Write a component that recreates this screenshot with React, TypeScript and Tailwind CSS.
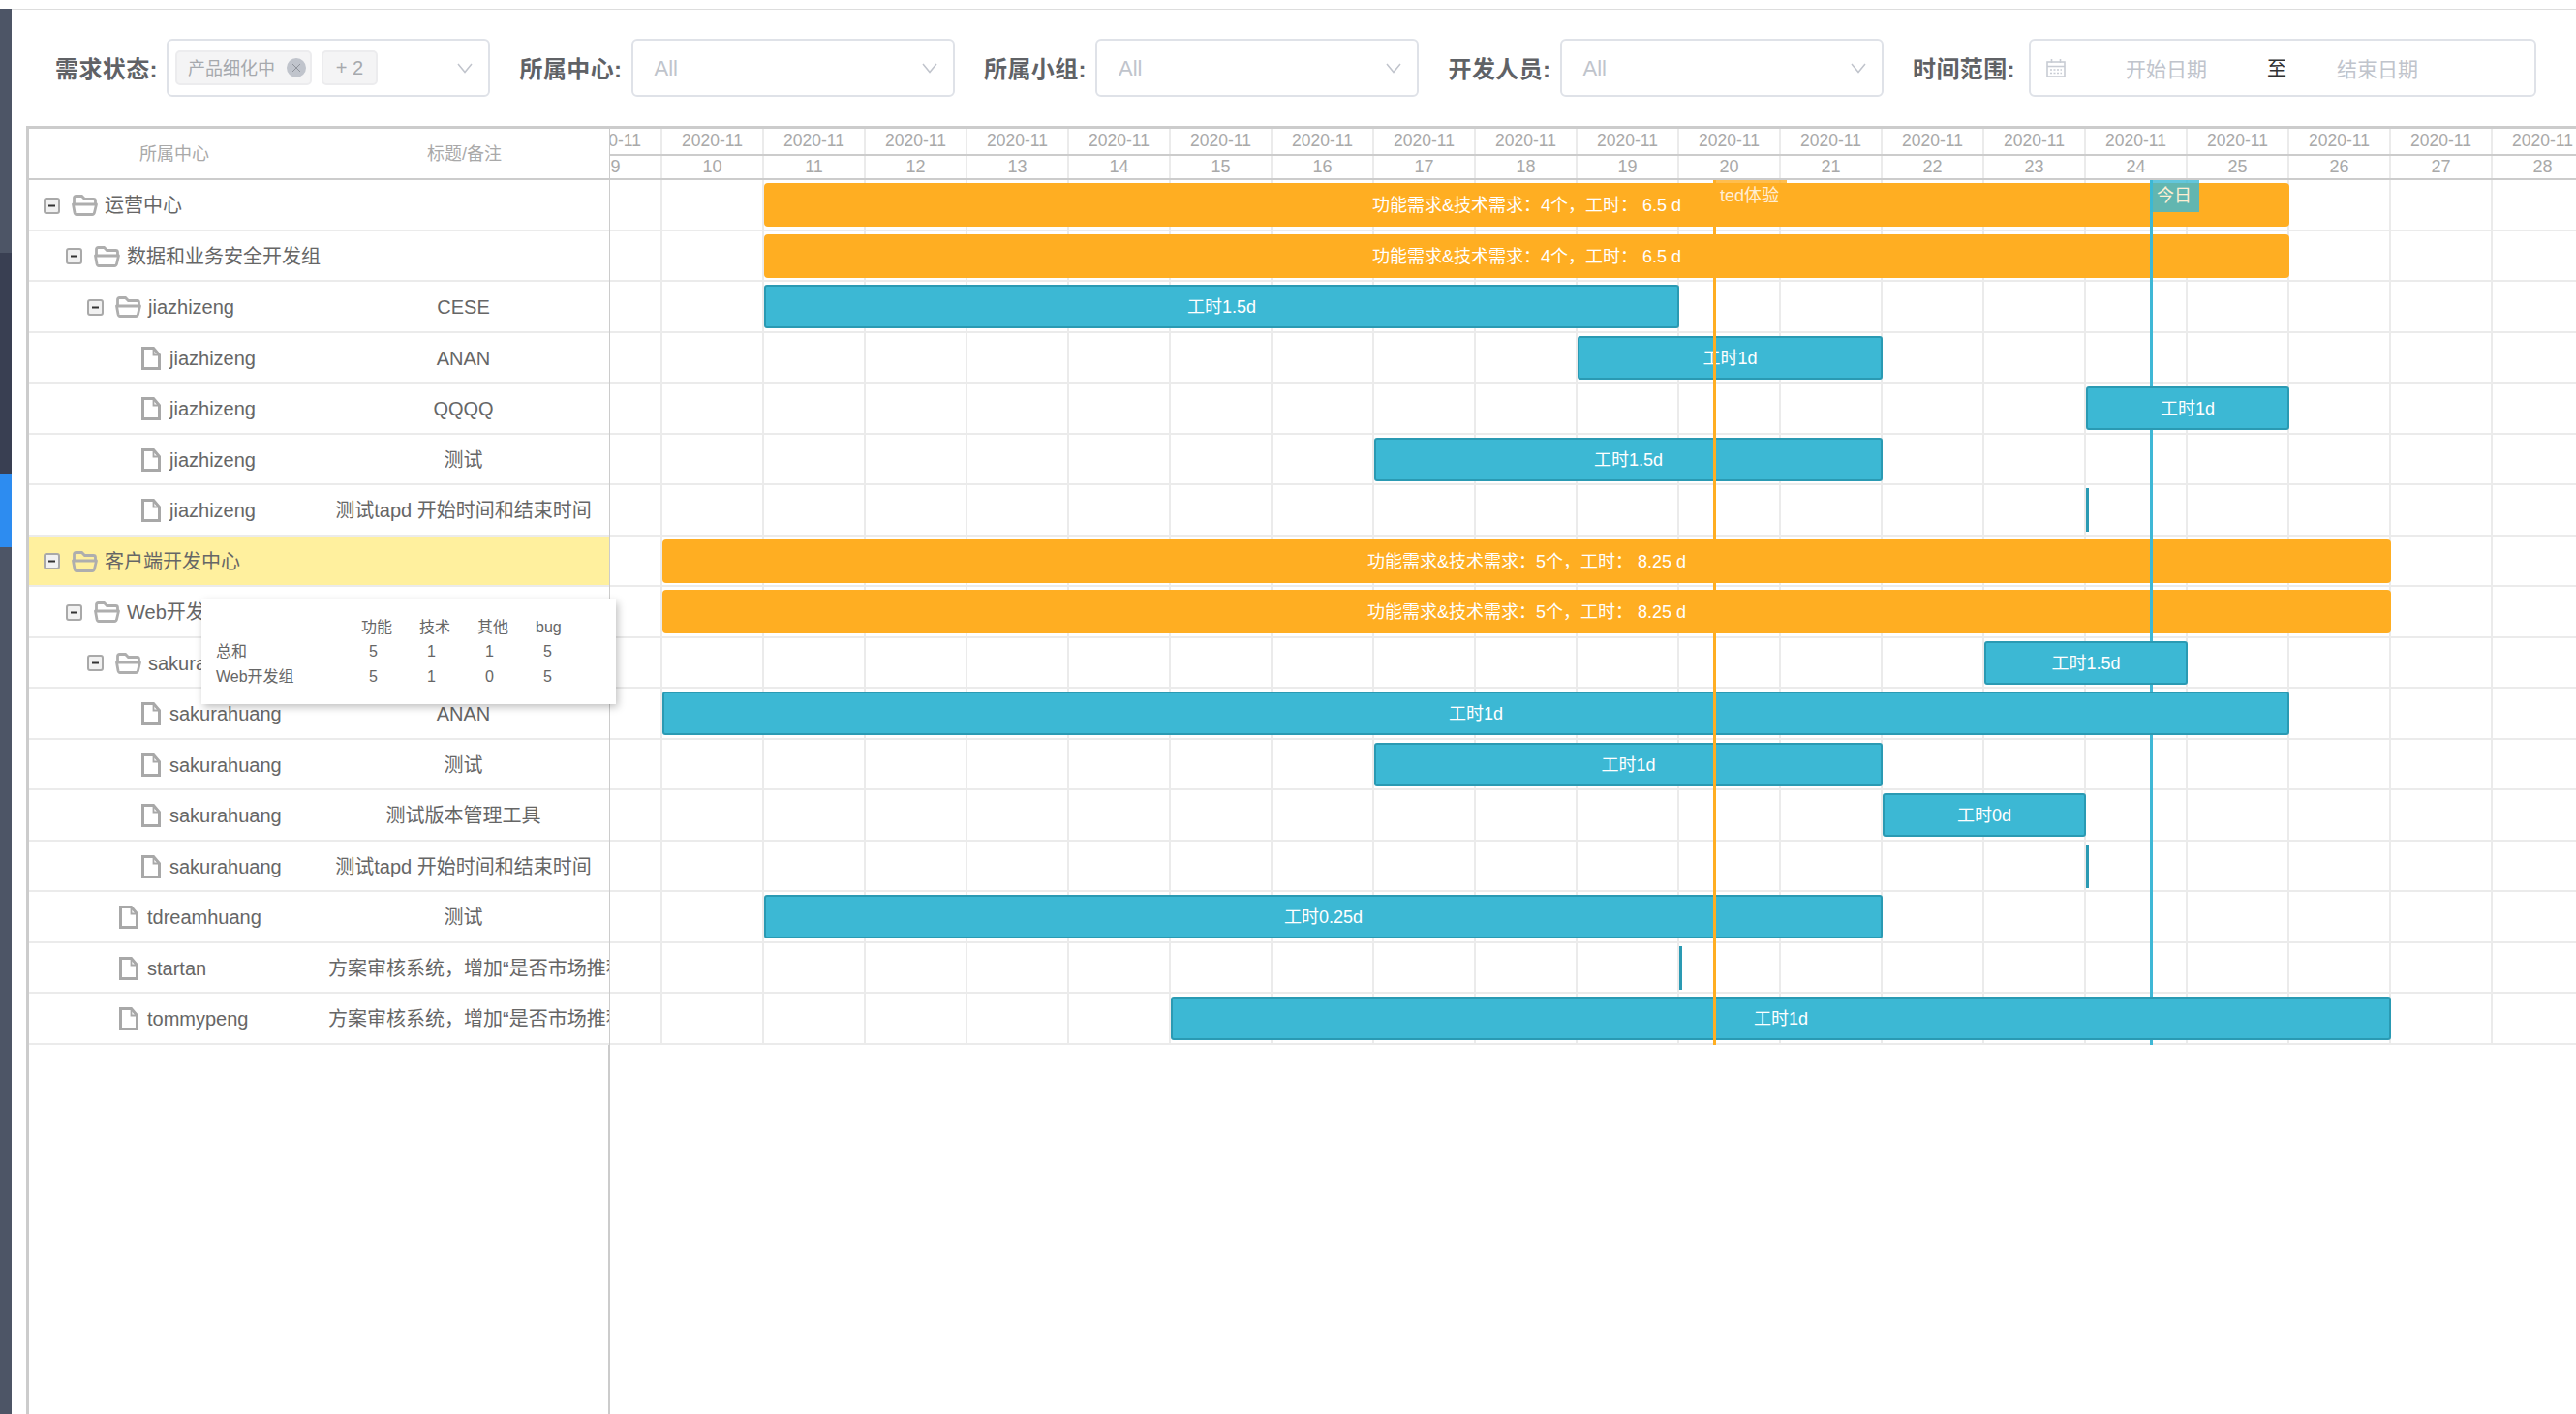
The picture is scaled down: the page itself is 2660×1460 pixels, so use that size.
import React from 'react';

const DAYS = [9, 10, 11, 12, 13, 14, 15, 16, 17, 18, 19, 20, 21, 22, 23, 24, 25, 26, 27, 28];

// x of the left edge of a day, relative to the chart body
const dayX = (day: number) => 53 + (day - 10) * 105;

interface Bar {
  from: number;
  to: number;
  text?: string;
  kind: 'sum' | 'task' | 'dot';
}

interface Row {
  name: string;
  title?: string;
  leaf?: boolean;
  level: number;
  active?: boolean;
  bar: Bar;
}

const sum4 = '功能需求&技术需求：4个，工时： 6.5 d';
const sum5 = '功能需求&技术需求：5个，工时： 8.25 d';
const longTitle = '方案审核系统，增加“是否市场推荐”字段';

const rows: Row[] = [
  { name: '运营中心', level: 0, bar: { from: 11, to: 26, text: sum4, kind: 'sum' } },
  { name: '数据和业务安全开发组', level: 1, bar: { from: 11, to: 26, text: sum4, kind: 'sum' } },
  { name: 'jiazhizeng', title: 'CESE', level: 2, bar: { from: 11, to: 20, text: '工时1.5d', kind: 'task' } },
  { name: 'jiazhizeng', title: 'ANAN', leaf: true, level: 3, bar: { from: 19, to: 22, text: '工时1d', kind: 'task' } },
  { name: 'jiazhizeng', title: 'QQQQ', leaf: true, level: 3, bar: { from: 24, to: 26, text: '工时1d', kind: 'task' } },
  { name: 'jiazhizeng', title: '测试', leaf: true, level: 3, bar: { from: 17, to: 22, text: '工时1.5d', kind: 'task' } },
  { name: 'jiazhizeng', title: '测试tapd 开始时间和结束时间', leaf: true, level: 3, bar: { from: 24, to: 24, kind: 'dot' } },
  { name: '客户端开发中心', level: 0, active: true, bar: { from: 10, to: 27, text: sum5, kind: 'sum' } },
  { name: 'Web开发组', level: 1, bar: { from: 10, to: 27, text: sum5, kind: 'sum' } },
  { name: 'sakurahuang', level: 2, bar: { from: 23, to: 25, text: '工时1.5d', kind: 'task' } },
  { name: 'sakurahuang', title: 'ANAN', leaf: true, level: 3, bar: { from: 10, to: 26, text: '工时1d', kind: 'task' } },
  { name: 'sakurahuang', title: '测试', leaf: true, level: 3, bar: { from: 17, to: 22, text: '工时1d', kind: 'task' } },
  { name: 'sakurahuang', title: '测试版本管理工具', leaf: true, level: 3, bar: { from: 22, to: 24, text: '工时0d', kind: 'task' } },
  { name: 'sakurahuang', title: '测试tapd 开始时间和结束时间', leaf: true, level: 3, bar: { from: 24, to: 24, kind: 'dot' } },
  { name: 'tdreamhuang', title: '测试', leaf: true, level: 2, bar: { from: 11, to: 22, text: '工时0.25d', kind: 'task' } },
  { name: 'startan', title: longTitle, leaf: true, level: 2, bar: { from: 20, to: 20, kind: 'dot' } },
  { name: 'tommypeng', title: longTitle, leaf: true, level: 2, bar: { from: 15, to: 27, text: '工时1d', kind: 'task' } },
];

const folderIndent: Record<number, string> = { 0: 'pl-[15px]', 1: 'pl-[38px]', 2: 'pl-[60px]' };
const leafIndent: Record<number, string> = { 2: 'pl-[93px]', 3: 'pl-[116px]' };

const tooltipRows = [
  ['', '功能', '技术', '其他', 'bug'],
  ['总和', '5', '1', '1', '5'],
  ['Web开发组', '5', '1', '0', '5'],
];

function Chevron() {
  return (
    <svg width="16" height="11" viewBox="0 0 16 11" fill="none" className="shrink-0">
      <path d="M1 1l7 8.5L15 1" stroke="#c0c4cc" strokeWidth="1.5" />
    </svg>
  );
}

function MinusBox() {
  return (
    <svg width="17" height="17" viewBox="0 0 17 17" className="shrink-0">
      <rect x="1" y="1" width="15" height="15" rx="2" fill="#f1f1f1" stroke="#a9a9a9" strokeWidth="2" />
      <rect x="5" y="7.5" width="7" height="2" fill="#333" />
    </svg>
  );
}

function FolderIcon() {
  return (
    <svg width="27" height="22" viewBox="0 0 27 22" fill="none" className="shrink-0 ml-[12px] mr-[7px]">
      <path d="M2.5 10V3.5q0-2 2-2h6l3 3h9q2 0 2 2V10" stroke="#aeaeae" strokeWidth="2.8" />
      <path d="M1.5 10h24l-2 8.5q-.4 2-2.4 2H5q-1.6 0-2-2z" stroke="#aeaeae" strokeWidth="2.8" strokeLinejoin="round" />
    </svg>
  );
}

function FileIcon() {
  return (
    <svg width="20" height="24" viewBox="0 0 20 24" fill="none" className="shrink-0 mr-[9px]">
      <path d="M1.5 1.5h11l6 7v14h-17z" fill="#fff" stroke="#a8a8a8" strokeWidth="3" />
      <path d="M12.5 1.5v7h6" stroke="#a8a8a8" strokeWidth="1.8" />
    </svg>
  );
}

function CalendarIcon() {
  return (
    <svg width="20" height="19" viewBox="0 0 20 19" fill="none" className="shrink-0">
      <rect x="1" y="3" width="18" height="15" stroke="#c8ccd4" strokeWidth="1.6" />
      <path d="M1 7.5h18M5.5 0v4M14.5 0v4" stroke="#c8ccd4" strokeWidth="1.6" />
      <path d="M4 11h12M4 14.5h12" stroke="#c8ccd4" strokeWidth="1.6" strokeDasharray="2 1.5" />
    </svg>
  );
}

function SelectBox({ children }: { children?: React.ReactNode }) {
  return (
    <div className="ml-[11px] mr-[30.5px] w-[334px] h-[60px] shrink-0 flex items-center border-2 border-[#dfe2e8] rounded-[6px] pr-[16px]">
      <div className="flex-1 flex items-center min-w-0">
        {children ?? <span className="pl-[22px] text-[22px] text-[#c0c4cc]">All</span>}
      </div>
      <Chevron />
    </div>
  );
}

function Label({ text }: { text: string }) {
  return (
    <span className="w-[104px] shrink-0 pt-[3px] text-[24px] font-bold tracking-[0.4px] text-[#606266] whitespace-nowrap">
      {text}
    </span>
  );
}

function FilterBar() {
  return (
    <div className="h-[120px] shrink-0 flex items-center pl-[45px]">
      <Label text="需求状态:" />
      <SelectBox>
        <div className="ml-[7px] h-[36px] flex items-center border-2 border-[#ececee] bg-[#f4f4f5] rounded-[5px] pl-[11px] pr-[4px]">
          <span className="pt-[2px] text-[18px] text-[#a6a9ad]">产品细化中</span>
          <span className="ml-[12px] w-[20px] h-[20px] rounded-full bg-[#c0c4cc] flex items-center justify-center">
            <svg width="10" height="10" viewBox="0 0 10 10" fill="none">
              <path d="M1 1l8 8M9 1l-8 8" stroke="#8f939b" strokeWidth="1" />
            </svg>
          </span>
        </div>
        <div className="ml-[10px] w-[58px] h-[36px] flex items-center justify-center border-2 border-[#ececee] bg-[#f4f4f5] rounded-[5px] text-[20px] text-[#a6a9ad]">
          + 2
        </div>
      </SelectBox>
      <Label text="所属中心:" />
      <SelectBox />
      <Label text="所属小组:" />
      <SelectBox />
      <Label text="开发人员:" />
      <SelectBox />
      <Label text="时间范围:" />
      <div className="ml-[16px] w-[524px] h-[60px] shrink-0 flex items-center border-2 border-[#dfe2e8] rounded-[6px] pl-[16px]">
        <CalendarIcon />
        <span className="w-[208px] pt-[3px] text-center text-[21px] text-[#c0c4cc]">开始日期</span>
        <span className="w-[20px] pt-[2px] text-center text-[20px] text-[#303133]">至</span>
        <span className="w-[188px] pt-[3px] text-center text-[21px] text-[#c0c4cc]">结束日期</span>
      </div>
    </div>
  );
}

function TreeRow({ row }: { row: Row }) {
  return (
    <div className={`h-[52.5px] pt-[2px] flex items-center border-b-2 border-[#ebebeb] text-[20px] text-[#666] ${row.active ? 'bg-[#fff09e]' : ''}`}>
      <div className={`w-[298px] shrink-0 flex items-center ${row.leaf ? leafIndent[row.level] : folderIndent[row.level]}`}>
        {row.leaf ? (
          <FileIcon />
        ) : (
          <>
            <MinusBox />
            <FolderIcon />
          </>
        )}
        <span className="whitespace-nowrap">{row.name}</span>
      </div>
      <div className="flex-1 min-w-0 px-[11px] text-center whitespace-nowrap overflow-hidden">{row.title}</div>
    </div>
  );
}

function GanttBar({ bar }: { bar: Bar }) {
  const left = dayX(bar.from);
  if (bar.kind === 'dot') {
    return <div className="absolute top-[3px] h-[45px] w-[3px] z-[3] bg-[#2a9ab3]" style={{ left: left + 1 }} />;
  }
  const width = dayX(bar.to) - left;
  if (bar.kind === 'sum') {
    return (
      <div
        className="absolute top-[3px] h-[45px] pt-[2px] z-[1] bg-[#ffae22] rounded-[4px] flex items-center justify-center text-[18px] text-white whitespace-pre"
        style={{ left: left + 1, width }}
      >
        {bar.text}
      </div>
    );
  }
  return (
    <div
      className="absolute top-[3px] h-[45px] pt-[2px] z-[3] bg-[#3cb8d4] border-2 border-[#2a9ab3] rounded-[3px] flex items-center justify-center text-[18px] text-white whitespace-pre"
      style={{ left: left + 1, width }}
    >
      {bar.text}
    </div>
  );
}

function Chart() {
  return (
    <div className="flex-1 min-w-0 overflow-hidden">
      <div className="ml-[-51px] flex h-[28px] border-b-2 border-[#ccc] w-[2200px]">
        {DAYS.map((d) => (
          <div key={d} className="w-[105px] shrink-0 border-r-2 border-[#ebebeb] text-center text-[17.5px] leading-[25px] text-[#a9a9a9]">
            2020-11
          </div>
        ))}
      </div>
      <div className="ml-[-51px] flex h-[25px] border-b-2 border-[#ccc] w-[2200px]">
        {DAYS.map((d) => (
          <div
            key={d}
            className={`w-[105px] shrink-0 border-r-2 border-[#ebebeb] text-center text-[18px] leading-[23px] text-[#a9a9a9] ${d === 9 ? 'pl-[10px]' : ''}`}
          >
            {d}
          </div>
        ))}
      </div>
      <div className="relative">
        {rows.map((row, i) => (
          <div key={i} className="relative h-[52.5px] border-b-2 border-[#ebebeb]">
            <div className="ml-[-51px] flex h-full w-[2200px]">
              {DAYS.map((d) => (
                <div key={d} className="w-[105px] shrink-0 h-full border-r-2 border-[#ebebeb]" />
              ))}
            </div>
            <GanttBar bar={row.bar} />
          </div>
        ))}
        {/* today marker sits over the summary bars but under the task bars */}
        <div className="absolute top-0 bottom-0 left-[1590px] w-[3px] z-[2] bg-[#3fb8d6]" />
        <div className="absolute top-0 left-[1590px] w-[51px] h-[33px] z-[5] bg-[#3cb8d4] opacity-80 pl-[7px] text-[18px] leading-[33px] text-white">
          今日
        </div>
        <div className="absolute top-0 bottom-0 left-[1139px] w-[3px] z-[4] bg-[#ffae22]" />
        <div className="absolute top-0 left-[1140px] w-[75px] h-[33px] z-[5] bg-[#ffae22] opacity-80 pl-[6px] text-[18px] leading-[33px] text-white">
          ted体验
        </div>
      </div>
    </div>
  );
}

function Tooltip() {
  return (
    <div className="absolute left-[178px] top-[486px] w-[428px] h-[108px] z-20 bg-white shadow-[2px_3px_8px_rgba(0,0,0,0.25)] pl-[15px] pt-[16px] text-[16px] text-[#666]">
      {tooltipRows.map((cells, i) => (
        <div key={i} className="grid grid-cols-[150px_60px_60px_60px_60px] h-[25.5px] items-center">
          {cells.map((cell, j) => (
            <span key={j} className={`whitespace-nowrap ${i > 0 && j > 0 ? 'pl-[8px]' : ''}`}>
              {cell}
            </span>
          ))}
        </div>
      ))}
    </div>
  );
}

export default function App() {
  return (
    <div className="w-[2660px] h-[1460px] overflow-hidden bg-white flex flex-col [font-family:'Liberation_Sans','Noto_Sans_CJK_SC',sans-serif]">
      <div className="h-[9px] shrink-0" />
      <div className="flex-1 min-h-0 flex">
        <div className="w-[12px] shrink-0 flex flex-col">
          <div className="h-[252px] bg-[#4d5566]" />
          <div className="h-[228px] bg-[#393f52]" />
          <div className="h-[76px] bg-[#2d8cf0]" />
          <div className="flex-1 bg-[#4d5566]" />
        </div>
        <div className="flex-1 min-w-0 flex flex-col border-t border-[#ddd]">
          <FilterBar />
          <div className="flex-1 min-h-0 relative ml-[15px] flex border-l-[3px] border-t-[3px] border-[#ccc]">
            <div className="w-[600px] shrink-0 flex flex-col border-r border-[#ccc]">
              <div className="h-[53px] shrink-0 pt-[2px] flex items-center border-b-2 border-[#ccc] text-[18px] text-[#a9a9a9]">
                <div className="w-[300px] text-center">所属中心</div>
                <div className="flex-1 text-center">标题/备注</div>
              </div>
              {rows.map((row, i) => (
                <TreeRow key={i} row={row} />
              ))}
              <div className="flex-1 border-r border-[#ccc]" />
            </div>
            <Chart />
            <Tooltip />
          </div>
        </div>
      </div>
    </div>
  );
}
